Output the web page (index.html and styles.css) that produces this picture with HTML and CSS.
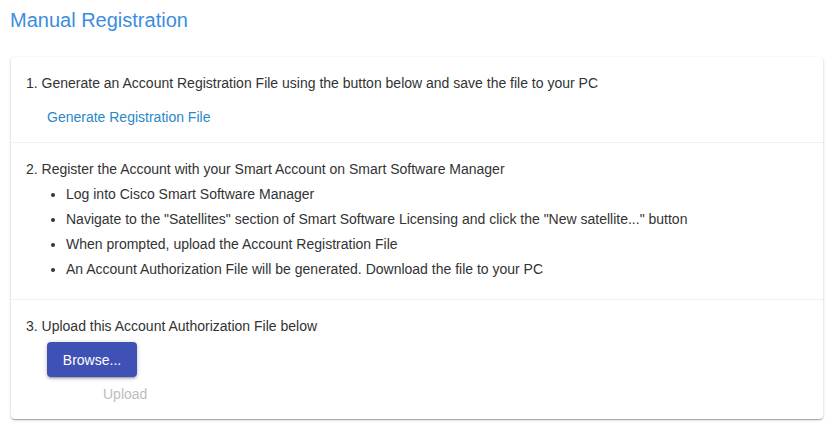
FILE: index.html
```html
<!DOCTYPE html>
<html lang="en">
<head>
    <meta charset="UTF-8">
    <title>Manual Registration</title>
    <link rel="stylesheet" href="styles.css">
</head>
<body>

    <h2 class="title">Manual Registration</h2>

    <div class="panels">
        <div class="panel">
            <div class="step">1. Generate an Account Registration File using the button below and save the file to your PC</div>
            <a class="link" href="#">Generate Registration File</a>
        </div>

        <div class="panel panel-list">
            <div class="step">2. Register the Account with your Smart Account on Smart Software Manager</div>
            <ul class="bullets">
                <li>Log into Cisco Smart Software Manager</li>
                <li>Navigate to the "Satellites" section of Smart Software Licensing and click the "New satellite..." button</li>
                <li>When prompted, upload the Account Registration File</li>
                <li>An Account Authorization File will be generated. Download the file to your PC</li>
            </ul>
        </div>

        <div class="panel panel-upload">
            <div class="step">3. Upload this Account Authorization File below</div>
            <button class="browse">Browse...</button>
            <div class="upload">Upload</div>
        </div>
    </div>

</body>
</html>
```

FILE: styles.css
```css
body {
    margin: 0;
    padding: 8px 11px;
    font-family: "Liberation Sans", Arial, sans-serif;
    font-size: 14px;
    color: #333;
    background: #fff;
}
.title {
    margin: 0 0 25px -1px;
    font-size: 20px;
    line-height: 24px;
    font-weight: normal;
    color: #3b8de0;
}
.panels {
    border-radius: 4px;
    background: white;
    box-shadow: 0 1px 3px rgba(0, 0, 0, 0.2), 0 1px 1px rgba(0, 0, 0, 0.14), 0 2px 1px -1px rgba(0, 0, 0, 0.12);
}
.panel {
    padding: 16px 15px 15px;
    line-height: 20px;
}
.panel + .panel {
    border-top: 1px solid #f0f0f0;
}
.link {
    display: inline-block;
    margin: 14px 0 0 21px;
    color: #2b87c8;
    text-decoration: none;
}
.panel-list {
    padding-bottom: 17px;
}
.bullets {
    margin: 3px 0 0;
    padding-left: 40px;
}
.bullets li {
    line-height: 25px;
}
.panel-upload {
    padding-bottom: 15px;
}
.browse {
    display: block;
    margin: 6px 0 0 21px;
    width: 90px;
    height: 35px;
    border: none;
    border-radius: 4px;
    background: #3f51b5;
    color: white;
    font-family: inherit;
    font-size: 14px;
    box-shadow: 0 1px 5px rgba(0, 0, 0, 0.2), 0 2px 2px rgba(0, 0, 0, 0.14), 0 3px 1px -2px rgba(0, 0, 0, 0.12);
    cursor: pointer;
}
.upload {
    margin: 7px 0 0 77px;
    color: #bdbdbd;
}
```
